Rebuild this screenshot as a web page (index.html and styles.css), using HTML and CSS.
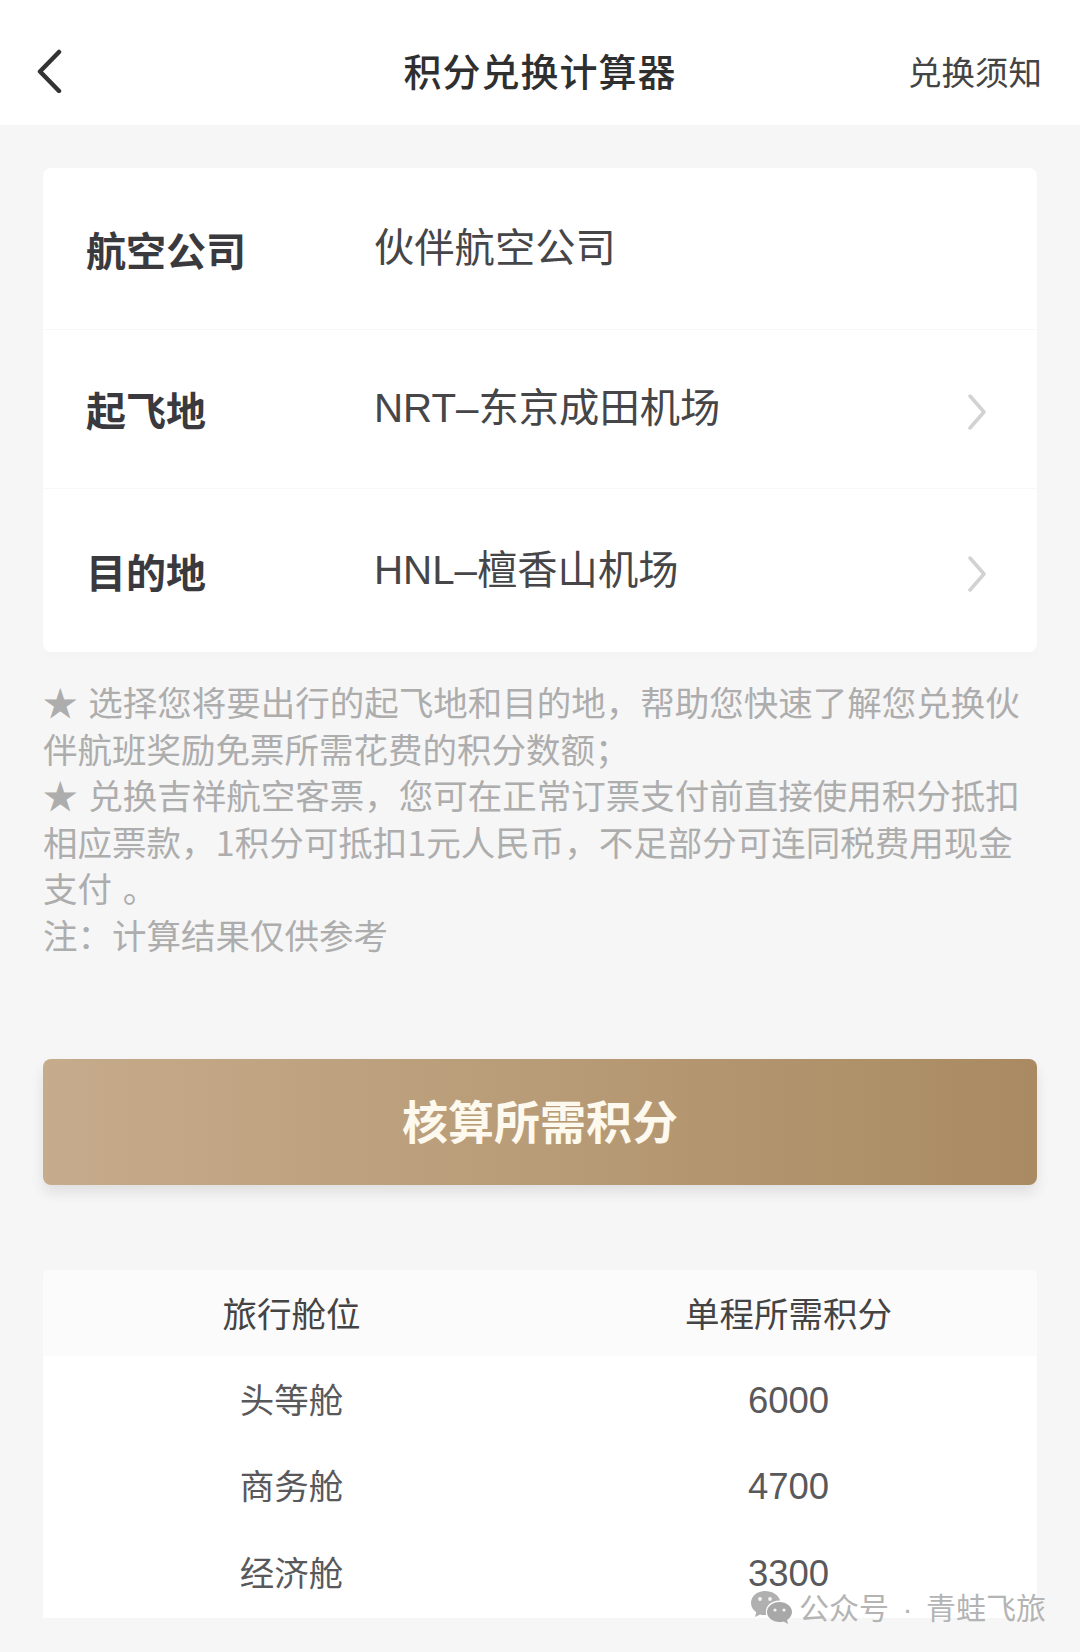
FILE: index.html
```html
<!DOCTYPE html>
<html lang="zh-CN">
<head>
<meta charset="utf-8">
<title>积分兑换计算器</title>
<link rel="stylesheet" href="styles.css">
</head>
<body>
<div class="page">
  <header class="nav">
    <svg class="back" viewBox="0 0 30 44" aria-hidden="true"><path d="M25 3 6 22.5 25 42"/></svg>
    <h1 class="nav-title">积分兑换计算器</h1>
    <span class="nav-link">兑换须知</span>
  </header>
  <main class="content">
    <section class="card">
      <div class="row"><span class="row-label">航空公司</span><span class="row-value">伙伴航空公司</span></div>
      <div class="row"><span class="row-label">起飞地</span><span class="row-value">NRT–东京成田机场</span>
        <svg class="chev" viewBox="0 0 20 36" aria-hidden="true"><path d="M3 2 17 18 3 34"/></svg></div>
      <div class="row"><span class="row-label">目的地</span><span class="row-value">HNL–檀香山机场</span>
        <svg class="chev" viewBox="0 0 20 36" aria-hidden="true"><path d="M3 2 17 18 3 34"/></svg></div>
    </section>
    <div class="notes">
      <p>★ 选择您将要出行的起飞地和目的地，帮助您快速了解您兑换伙伴航班奖励免票所需花费的积分数额；</p>
      <p>★ 兑换吉祥航空客票，您可在正常订票支付前直接使用积分抵扣相应票款，1积分可抵扣1元人民币，不足部分可连同税费用现金支付 。</p>
      <p>注：计算结果仅供参考</p>
    </div>
    <button class="cta" type="button">核算所需积分</button>
    <section class="table">
      <div class="cell head">旅行舱位</div><div class="cell head">单程所需积分</div>
      <div class="cell">头等舱</div><div class="cell num">6000</div>
      <div class="cell">商务舱</div><div class="cell num">4700</div>
      <div class="cell last">经济舱</div><div class="cell num last">3300</div>
    </section>
  </main>
  <div class="mark">
    <svg class="mark-icon" viewBox="0 0 42 34" aria-hidden="true">
      <path class="b1" d="M15 1C7 1 1 6.400 1 13c0 3.800 2 7 5.200 9.200L5 27l5.200-2.600c1.500.4 3 .6 4.800.6h1.200a11 11 0 0 1-.4-3c0-6.500 6-11.500 13.400-11.500h.8C28.600 5 22.400 1 15 1Z"/>
      <path class="b2" d="M29.500 12C22.600 12 17 16.500 17 22s5.600 10 12.500 10c1.500 0 2.900-.2 4.200-.6L38 34l-1-4c3-1.900 5-4.700 5-8 0-5.500-5.600-10-12.500-10Z"/>
      <circle class="eye" cx="10" cy="9" r="1.900"/><circle class="eye" cx="20" cy="9" r="1.900"/>
      <circle class="eye" cx="25" cy="20" r="1.600"/><circle class="eye" cx="34" cy="20" r="1.600"/>
    </svg>
    <span class="mark-text">公众号<span class="mark-dot">·</span>青蛙飞旅</span>
  </div>
</div>
</body>
</html>
```

FILE: styles.css
```css
* { box-sizing: border-box; }
html, body { margin: 0; padding: 0; }
body {
  background: #f6f6f6;
  font-family: "Noto Sans CJK SC", "Liberation Sans", sans-serif;
  color: #333;
}
.page { position: relative; width: 1080px; height: 1652px; overflow: hidden; }

.nav {
  height: 125px;
  background: #fff;
  display: flex;
  align-items: center;
  justify-content: space-between;
  padding: 16px 38px 0 34px;
  position: relative;
}
.back { width: 30px; height: 44px; }
.back path { fill: none; stroke: #333; stroke-width: 4.500; stroke-linecap: round; stroke-linejoin: round; }
.nav-title {
  margin: 0;
  position: absolute;
  left: 0; right: 0; top: 38px;
  text-align: center;
  font-size: 38px;
  line-height: 64px;
  letter-spacing: 1px;
  font-weight: 500;
  color: #2f2f2f;
}
.nav-link { font-size: 33.500px; line-height: 56px; color: #444; }

.content { padding: 43px 43px 0; }

.card {
  background: #fff;
  border-radius: 8px;
  box-shadow: 0 6px 10px rgba(0,0,0,.012);
  height: 484px;
  display: grid;
  grid-template-rows: 162px 159px 163px;
}
.row {
  display: flex;
  align-items: center;
  padding: 0 50px 0 43px;
  border-bottom: 1px solid #f8f8f8;
}
.row:last-child { border-bottom: 0; }
.row-label { width: 288px; font-size: 40px; font-weight: 700; color: #3a3a3e; line-height: 54px; }
.row-value {
  flex: 1;
  font-family: "Liberation Sans", "Noto Sans CJK SC", sans-serif;
  font-size: 40.300px;
  line-height: 52px;
  color: #464649;
}
.chev { width: 20px; height: 36px; margin-top: 6px; }
.chev path { fill: none; stroke: #d2d2d2; stroke-width: 3.500; stroke-linecap: round; stroke-linejoin: round; }

.notes {
  margin-top: 26px;
  font-size: 34.500px;
  line-height: 46.500px;
  color: #adadad;
  height: 281px;
  word-spacing: 3px;
}
.notes p { margin: 0; }

.cta {
  display: block;
  width: 100%;
  height: 126px;
  margin: 100px 0 0;
  border: 0;
  border-radius: 8px;
  background: linear-gradient(90deg, #c6ab8c 0%, #b89c77 50%, #a98a62 100%);
  box-shadow: 0 8px 14px rgba(0,0,0,.09);
  color: #fdf9ef;
  font-family: inherit;
  font-size: 46px;
  font-weight: 700;
  line-height: 60px;
  padding: 0 0 6px;
}

.table {
  margin-top: 85px;
  height: 348px;
  background: #fff;
  display: grid;
  grid-template-columns: 1fr 1fr;
  grid-template-rows: 86px 86px 86px 90px;
  border-radius: 6px 6px 0 0;
  overflow: hidden;
}
.cell {
  display: flex;
  align-items: center;
  justify-content: center;
  font-size: 34.500px;
  color: #59595c;
  padding-bottom: 2px;
}
.head { background: #fbfbfb; color: #444; }
.cell.last { padding-bottom: 4px; }
.cell.num {
  font-family: "Liberation Sans", sans-serif;
  font-size: 36.500px;
  padding: 3px 0 0;
}
.cell.num.last { padding: 1px 0 0; }

.mark {
  position: absolute;
  left: 750px;
  top: 1590px;
  display: flex;
  align-items: center;
  gap: 7px;
  height: 34px;
}
.mark-icon { width: 42px; height: 34px; }
.b1 { fill: #b0b0b0; }
.b2 { fill: #a8a8a8; }
.eye { fill: #f4f4f4; }
.mark-text { font-size: 30px; line-height: 34px; color: #b4b4b4; white-space: nowrap; }
.mark-dot { display: inline-block; width: 37px; text-align: center; font-family: "Liberation Sans", sans-serif; }
```
